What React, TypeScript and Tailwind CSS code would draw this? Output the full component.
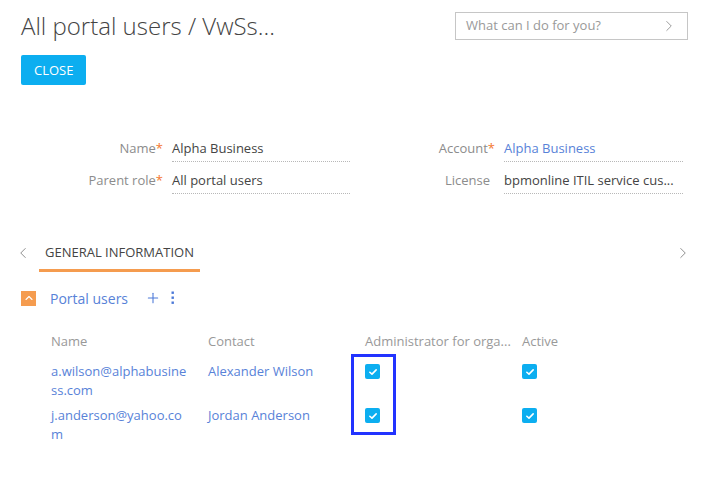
import { ChevronLeft, ChevronRight, ChevronUp, Plus } from 'lucide-react'

const blue = 'text-[#5882d8]'

function Check() {
  return (
    <span className="flex h-[15px] w-[15px] items-center justify-center rounded-[2px] bg-[#0caef0]">
      <svg viewBox="0 0 12 12" width="10" height="10" aria-hidden="true">
        <path d="M2.2 6.3 4.8 8.6 9.8 3.4" fill="none" stroke="white" strokeWidth="1.9" strokeLinecap="round" strokeLinejoin="round" />
      </svg>
    </span>
  )
}

function Field({ label, required, value, link, labelW, valueW }: { label: string; required?: boolean; value: string; link?: boolean; labelW: string; valueW: string }) {
  return (
    <div className="flex h-[32px] items-start">
      <div className={`${labelW} shrink-0 text-right text-[13px] leading-[20px] text-[#8c8c8c]`}>
        {label}
        {required && <span className="text-[#f4762e]">*</span>}
      </div>
      <div className={`${valueW} ml-[9px] whitespace-nowrap border-b border-dotted border-[#b8b8b8] pb-[3px] text-[13px] leading-[20px] ${link ? blue : 'text-[#444]'}`}>
        {value}
      </div>
    </div>
  )
}

const rows = [
  { name: 'a.wilson@alphabusiness.com', contact: 'Alexander Wilson' },
  { name: 'j.anderson@yahoo.com', contact: 'Jordan Anderson' },
]

export default function App() {
  return (
    <div className="relative h-[488px] w-[704px] overflow-hidden bg-white font-['Open_Sans',sans-serif]">
      <div className="flex items-start justify-between pl-[21px] pr-[16px] pt-[9px]">
        <h1 className="text-[24px] font-light leading-[34px] text-[#444]">All portal users / VwSs...</h1>
        <div className="mt-[3px] flex h-[28px] w-[233px] items-center justify-between border border-[#c6c6c6] pl-[10px] pr-[9px] text-[13px] text-[#999]">
          <span>What can I do for you?</span>
          <ChevronRight size={18} strokeWidth={1.1} className="text-[#888]" />
        </div>
      </div>

      <div className="pl-[21px] pt-[12px]">
        <button className="h-[30px] rounded-[2px] bg-[#0caef0] px-[13px] text-[13px] leading-[30px] text-white">CLOSE</button>
      </div>

      <div className="mt-[53px] flex pl-[21px]">
        <div className="flex flex-col">
          <Field label="Name" required value="Alpha Business" labelW="w-[142px]" valueW="w-[178px]" />
          <Field label="Parent role" required value="All portal users" labelW="w-[142px]" valueW="w-[178px]" />
        </div>
        <div className="ml-[5px] flex flex-col">
          <Field label="Account" required value="Alpha Business" link labelW="w-[140px]" valueW="w-[179px]" />
          <Field label="License" value="bpmonline ITIL service cus..." labelW="w-[140px] pr-[5px]" valueW="w-[179px]" />
        </div>
      </div>

      <div className="mt-[41px] flex items-center justify-between pl-[14px] pr-[12px]">
        <div className="flex items-center">
          <ChevronLeft size={18} strokeWidth={1.1} className="-mt-[8px] text-[#777]" />
          <div className="ml-[7px] border-b-[3px] border-[#f59c4f] px-[6px] pb-[6px] text-[13px] text-[#444]">GENERAL INFORMATION</div>
        </div>
        <ChevronRight size={18} strokeWidth={1.1} className="-mt-[8px] text-[#777]" />
      </div>

      <div className="mt-[16px] flex items-center pl-[21px]">
        <span className="flex h-[15px] w-[15px] items-center justify-center bg-[#f59c4f]">
          <ChevronUp size={12} strokeWidth={2.2} className="text-white" />
        </span>
        <span className={`ml-[14px] text-[14px] ${blue}`}>Portal users</span>
        <Plus size={16} strokeWidth={1.6} className="ml-[17px] text-[#4b78d8]" />
        <svg viewBox="0 0 4 14" width="4" height="14" className="ml-[10px]" aria-hidden="true">
          <rect x="0.5" y="0.5" width="2.4" height="2.4" fill="#4b78d8" />
          <rect x="0.5" y="5.5" width="2.4" height="2.4" fill="#4b78d8" />
          <rect x="0.5" y="10.5" width="2.4" height="2.4" fill="#4b78d8" />
        </svg>
      </div>

      <div className="mt-[23px] pl-[51px]">
        <div className="flex text-[13px] text-[#999]">
          <div className="w-[157px]">Name</div>
          <div className="w-[157px]">Contact</div>
          <div className="w-[157px] whitespace-nowrap">Administrator for orga...</div>
          <div>Active</div>
        </div>
        <div className="mt-[11px] flex flex-col gap-[6px]">
          {rows.map((r) => (
            <div key={r.name} className="flex text-[13px] leading-[19px]">
              <div className={`w-[138px] break-all ${blue}`}>{r.name}</div>
              <div className={`ml-[19px] w-[157px] ${blue}`}>{r.contact}</div>
              <div className="w-[157px] pt-[2px]"><Check /></div>
              <div className="pt-[2px]"><Check /></div>
            </div>
          ))}
        </div>
      </div>

      <div className="absolute left-[351px] top-[354px] h-[81px] w-[45px] border-[3px] border-[#2233ff]" />
    </div>
  )
}
